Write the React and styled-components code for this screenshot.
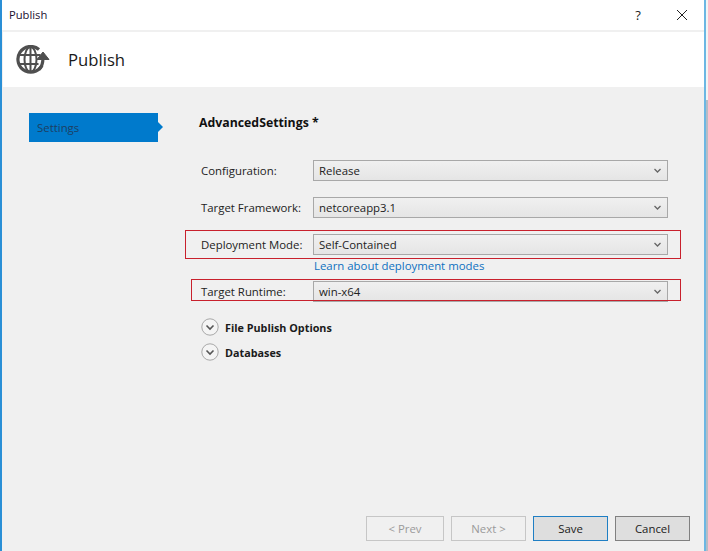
import React from 'react'
import styled, { createGlobalStyle, css } from 'styled-components'

const GlobalStyle = createGlobalStyle`
  html, body {
    margin: 0;
    padding: 0;
    background: linear-gradient(#f4f4f4 100px, #b4bcc6 100px);
  }
  body {
    font-family: "Open Sans", "Noto Sans", sans-serif;
    font-size: 11.4px;
    color: #1b1b1b;
  }
`

const Window = styled.div`
  width: 706px;
  height: 551px;
  box-sizing: border-box;
  border-left: 2px solid #2a8fd6;
  border-right: 2px solid #6cb7e3;
  background: #f0f0f0;
  display: flex;
  flex-direction: column;
  overflow: hidden;
`

const TitleBar = styled.div`
  height: 29px;
  padding: 0 7px 1px;
  flex: none;
  background: #fff;
  display: flex;
  align-items: center;
`

const TitleText = styled.span`
  flex: 1;
  font-size: 11.2px;
  color: #1a1030;
`

const HelpMark = styled.span`
  width: 44px;
  text-align: center;
  font-size: 13px;
  color: #222;
`

const CloseMark = styled.svg`
  width: 12px;
  height: 12px;
  margin: 0 9px 0 16px;
`

const Header = styled.div`
  height: 55px;
  flex: none;
  margin-top: 2px;
  margin-left: 1px;
  background: #fff;
  display: flex;
  align-items: center;
  padding-left: 13px;
  gap: 18px;
`

const HeaderTitle = styled.span`
  font-size: 16.7px;
  color: #1a1a1a;
`

const Body = styled.div`
  flex: 1;
  display: flex;
  min-height: 0;
`

const Sidebar = styled.div`
  width: 170px;
  flex: none;
  padding: 26px 0 0 27px;
  box-sizing: border-box;
`

const NavItem = styled.div`
  position: relative;
  width: 129px;
  height: 29px;
  background: #007acc;
  color: #1d3f63;
  display: flex;
  align-items: center;
  padding-left: 8px;
  box-sizing: border-box;
  font-size: 11.4px;

  &::after {
    content: '';
    position: absolute;
    left: 100%;
    top: 9px;
    border-left: 5px solid #007acc;
    border-top: 5px solid transparent;
    border-bottom: 5px solid transparent;
  }
`

const Main = styled.div`
  flex: 1;
  display: flex;
  flex-direction: column;
  padding: 26px 0 0 27px;
`

const SectionTitle = styled.div`
  height: 19px;
  line-height: 19px;
  font-size: 12.3px;
  font-weight: 700;
  color: #111;
  margin-bottom: 28px;
`

const Form = styled.div`
  display: flex;
  flex-direction: column;
  padding-left: 2px;
`

const Row = styled.div`
  position: relative;
  display: flex;
  align-items: center;
  height: 21px;
  margin-bottom: ${p => p.$gap}px;

  ${p => p.$frame && css`
    &::after {
      content: '';
      position: absolute;
      left: ${p.$frame[0]}px;
      top: ${p.$frame[1]}px;
      width: ${p.$frame[2]}px;
      height: ${p.$frame[3]}px;
      pointer-events: none;
      background:
        linear-gradient(#c8202c, #c8202c) left top / 100% 1px no-repeat,
        linear-gradient(#c8202c, #c8202c) left bottom / 100% 1px no-repeat,
        linear-gradient(#c8202c, #c8202c) left top / 1px 100% no-repeat,
        linear-gradient(#c8202c, #c8202c) right top / 1px 100% no-repeat;
    }
  `}
`

const Label = styled.label`
  width: 112px;
  flex: none;
  color: #222;
`

const Select = styled.div`
  width: 355px;
  height: 21px;
  box-sizing: border-box;
  border: 1px solid #a8a8a8;
  background: linear-gradient(#f0f0f0, #e5e5e5);
  display: flex;
  align-items: center;
  justify-content: space-between;
  padding: 0 5px;
  color: #222;
`

const Chevron = styled.svg`
  width: 7px;
  height: 5px;
  margin-right: 1px;
`

const LearnLink = styled.a`
  margin: 3px 0 8px 113px;
  height: 15px;
  line-height: 15px;
  color: #0e70c0;
`

const Expander = styled.div`
  display: flex;
  align-items: center;
  gap: 6px;
  height: 18px;
  margin-bottom: ${p => p.$gap}px;
  font-size: 10.8px;
  font-weight: 700;
  color: #1b1b1b;
`

const Footer = styled.div`
  flex: none;
  height: 25px;
  display: flex;
  justify-content: flex-end;
  gap: 7px;
  padding: 0 14px 10px 0;
`

const Button = styled.button`
  width: ${p => p.$width}px;
  height: 25px;
  box-sizing: border-box;
  font: inherit;
  padding: 0;
  color: ${p => (p.disabled ? '#9a9a9a' : '#1b1b1b')};
  background: ${p => (p.disabled ? '#f0f0f0' : '#dedede')};
  border: 1px solid ${p => (p.disabled ? '#c6c6c6' : p.$primary ? '#1f7fc4' : '#808080')};
`

function GlobeIcon() {
  return (
    <svg width="34" height="29" viewBox="0 0 34 29" fill="none" stroke="#4f4f4f" strokeWidth="2">
      <ellipse cx="14.500" cy="14.500" rx="6" ry="12.500" />
      <path d="M14.500 2v25M2.500 10h22M2.500 19h20" />
      <path d="M23 4.500A12.800 12.800 0 1 0 27 18" strokeWidth="3.200" />
      <path d="M27 21v-9" stroke="#fff" strokeWidth="6" />
      <path d="M23 24.500C26 22 27 19 27 12" strokeWidth="3.200" />
      <path d="M21 14.500L27 7l6 7.500z" fill="#4f4f4f" stroke="#4f4f4f" strokeWidth="1" />
    </svg>
  )
}

function DownChevron() {
  return (
    <Chevron viewBox="0 0 7 5" fill="none" stroke="#666" strokeWidth="1.300">
      <path d="M.5 1l3 3 3-3" />
    </Chevron>
  )
}

function ExpandIcon() {
  return (
    <svg width="18" height="18" viewBox="0 0 18 18" fill="none">
      <circle cx="9" cy="9" r="8.200" fill="#f4f4f4" stroke="#a8a8a8" />
      <path d="M5.500 7.500L9 11l3.500-3.500" stroke="#555" strokeWidth="1.600" />
    </svg>
  )
}

export default function App() {
  return (
    <Window>
      <GlobalStyle />
      <TitleBar>
        <TitleText>Publish</TitleText>
        <HelpMark>?</HelpMark>
        <CloseMark viewBox="0 0 12 12" fill="none" stroke="#222" strokeWidth="1">
          <path d="M1 1l10 10M11 1L1 11" />
        </CloseMark>
      </TitleBar>

      <Header>
        <GlobeIcon />
        <HeaderTitle>Publish</HeaderTitle>
      </Header>

      <Body>
        <Sidebar>
          <NavItem>Settings</NavItem>
        </Sidebar>
        <Main>
          <SectionTitle>AdvancedSettings *</SectionTitle>
          <Form>
            <Row $gap={16}>
              <Label>Configuration:</Label>
              <Select>Release<DownChevron /></Select>
            </Row>
            <Row $gap={16}>
              <Label>Target Framework:</Label>
              <Select>netcoreapp3.1<DownChevron /></Select>
            </Row>
            <Row $gap={0} $frame={[-16, -4, 496, 29]}>
              <Label>Deployment Mode:</Label>
              <Select>Self-Contained<DownChevron /></Select>
            </Row>
            <LearnLink>Learn about deployment modes</LearnLink>
            <Row $gap={16} $frame={[-10, -2, 490, 22]}>
              <Label>Target Runtime:</Label>
              <Select>win-x64<DownChevron /></Select>
            </Row>
            <Expander $gap={7}><ExpandIcon />File Publish Options</Expander>
            <Expander $gap={0}><ExpandIcon />Databases</Expander>
          </Form>
        </Main>
      </Body>

      <Footer>
        <Button disabled $width={78}>&lt; Prev</Button>
        <Button disabled $width={75}>Next &gt;</Button>
        <Button $primary $width={75}>Save</Button>
        <Button $width={75}>Cancel</Button>
      </Footer>
    </Window>
  )
}
